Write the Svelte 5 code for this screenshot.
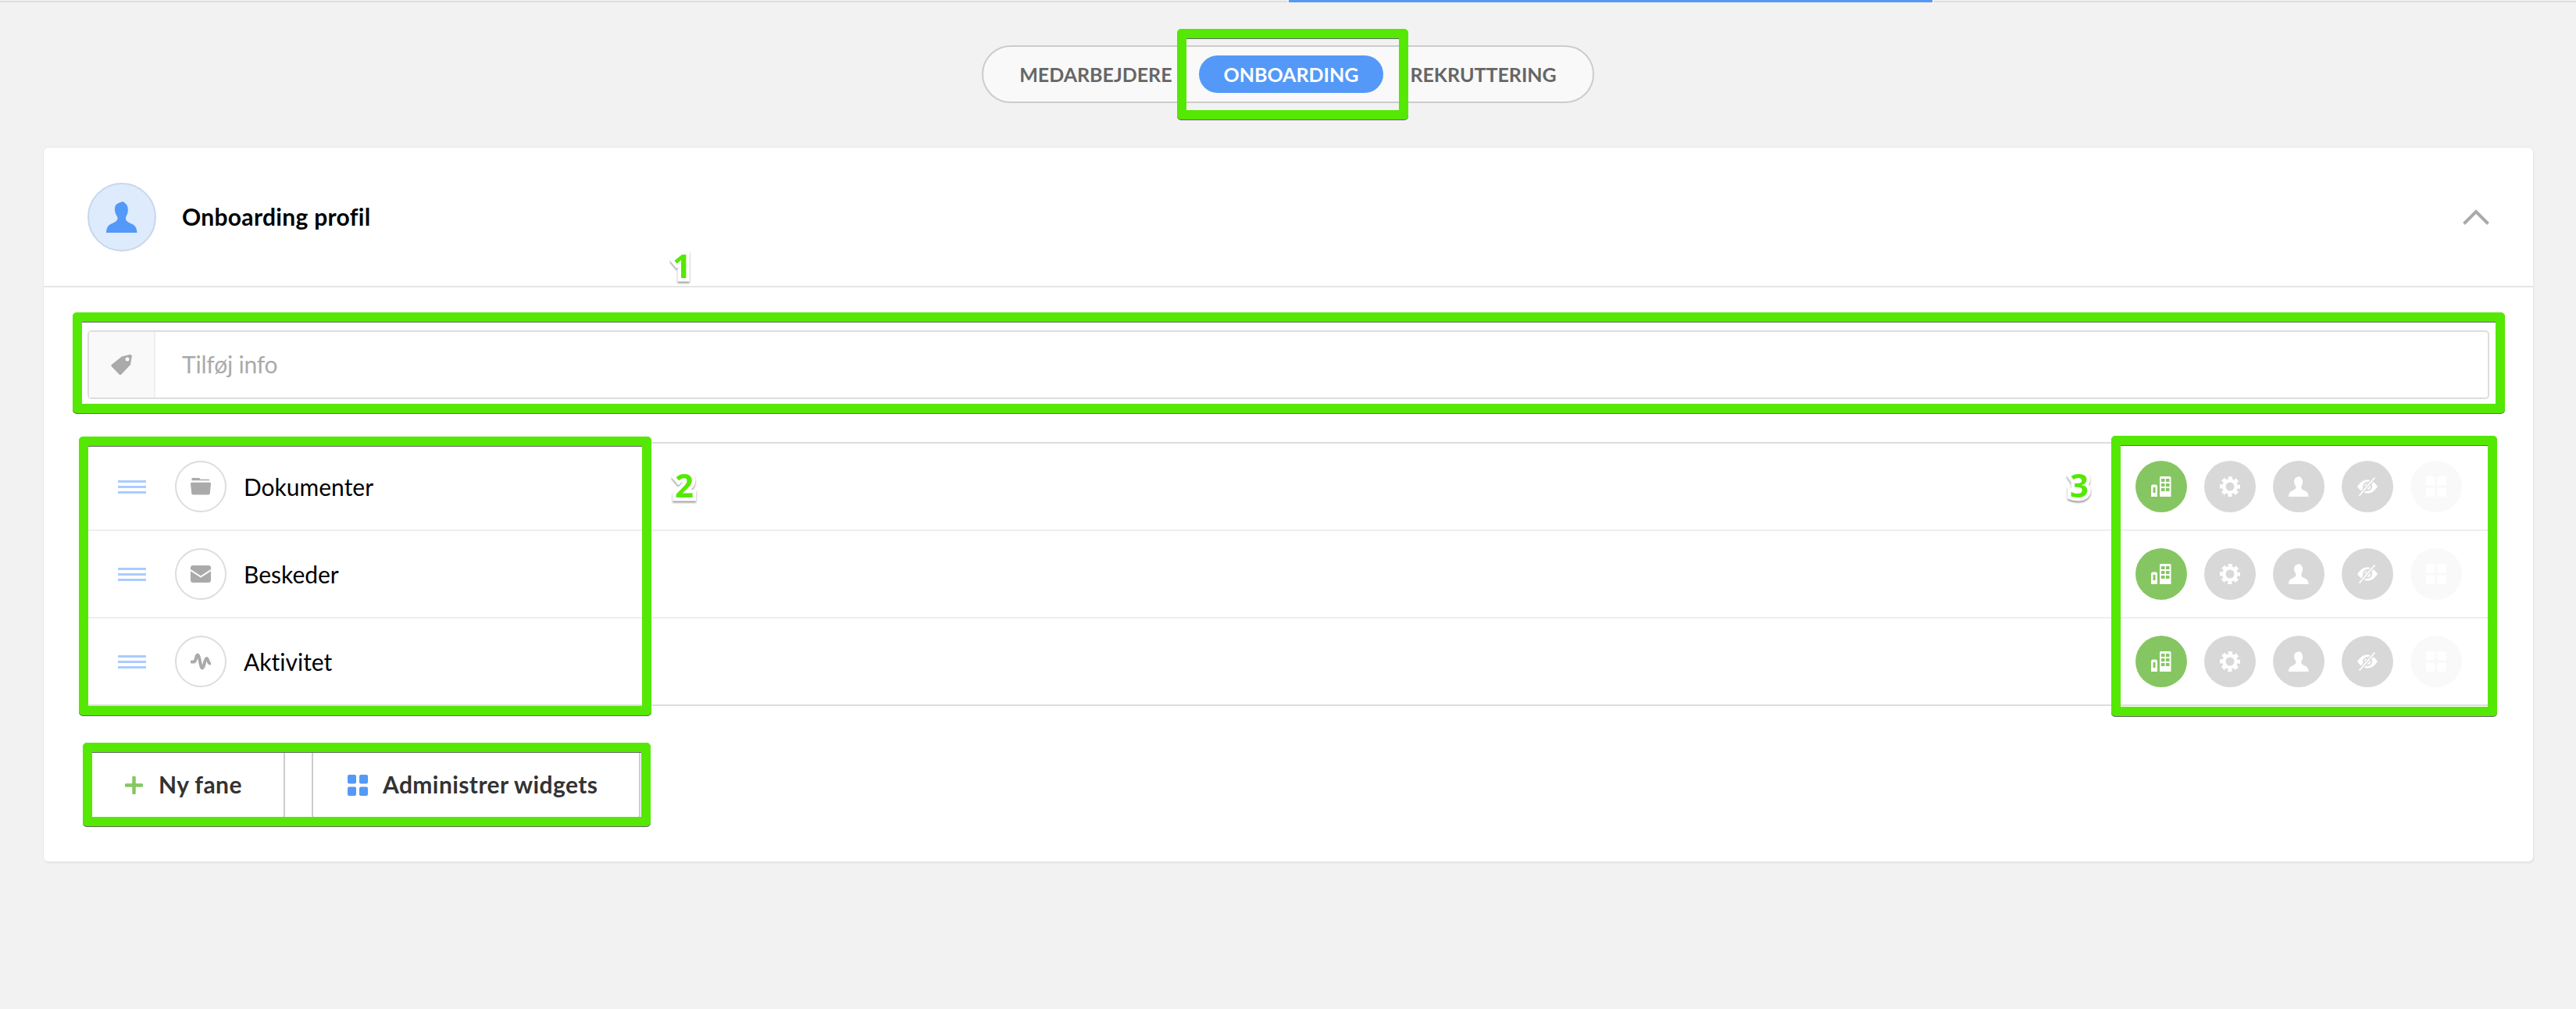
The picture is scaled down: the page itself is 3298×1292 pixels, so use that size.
<script>
  const rows = [
    { name: 'Dokumenter', icon: 'folder' },
    { name: 'Beskeder', icon: 'mail' },
    { name: 'Aktivitet', icon: 'pulse' }
  ];
  const tabs = ['MEDARBEJDERE', 'ONBOARDING', 'REKRUTTERING'];
</script>

{#snippet person(cls)}
  <svg class={cls} viewBox="0 0 40 40"><path fill="currentColor" d="M21 0C19 1.500 14 1 11.500 6C10.500 9 11 12 11.500 14C12 17 14 18 14.500 21C15 24 12 26 8 28C3 30 .5 32 0 40L39.500 40C39 32 36 30 31 28C27 26 24.500 24 25 21C25.500 18 27 17 27.500 14C28 11 28 8 27 6C26 3 24 2 21 0Z"/></svg>
{/snippet}

<div class="page">
  <div class="topbar"><span class="seg first"></span><span class="seg blue"></span><span class="seg"></span></div>

  <div class="tabs-wrap">
    <div class="tabs">
      {#each tabs as t, i}
        <span class="tab" class:active={i === 1}>{t}</span>
      {/each}
    </div>
  </div>

  <section class="card">
    <header class="head">
      <div class="avatar">{@render person('avatar-icon')}</div>
      <h2>Onboarding profil</h2>
      <svg class="chev" viewBox="0 0 34 20"><path d="M1.500 18.500L17 3L32.500 18.500" fill="none" stroke="#aaa" stroke-width="4"/></svg>
    </header>

    <div class="body">
      <div class="field">
        <div class="addon">
          <svg class="tag" viewBox="0 0 27 26"><path fill="#aaa" fill-rule="evenodd" d="M14 2.500L24.500 0C26 -.2 27 1 26.800 2.500L25 13L13.500 25.200C12.700 26.200 11.500 26.200 10.700 25.400L1 15.500C.2 14.700 .2 13.500 1 12.700ZM21 3.500A2.500 2.500 0 1 0 21 8.500A2.500 2.500 0 1 0 21 3.500Z"/></svg>
        </div>
        <span class="placeholder">Tilføj info</span>
      </div>

      <div class="table">
        {#each rows as r}
          <div class="row">
            <span class="handle"><i></i><i></i><i></i></span>
            <span class="ring">
              {#if r.icon === 'folder'}
                <svg class="ico" viewBox="0 0 26 22"><path fill="#aaa" d="M2.500 0H10.500C11.500 0 12 .8 12.500 1.800H23C23.800 1.800 24.300 2.400 24.300 3.300H1.500V1C1.500 .4 2 0 2.500 0ZM1.500 5.800H24.500C25.500 5.800 26 6.500 26 7.500L24.800 19.500C24.700 20.800 24 21.500 22.800 21.500H3.200C2 21.500 1.300 20.800 1.200 19.500L0 7.500C0 6.500 .5 5.800 1.500 5.800Z"/></svg>
              {:else if r.icon === 'mail'}
                <svg class="ico" viewBox="0 0 26 22"><rect width="26" height="22" rx="3" fill="#aaa"/><path d="M0 6L13 14.500L26 6" fill="none" stroke="#fff" stroke-width="2"/></svg>
              {:else}
                <svg class="ico" viewBox="0 0 26 22"><path d="M1.500 11.500H4.500C7 11.500 6.800 2.500 9 2.500C11.500 2.500 12.500 19.500 15 19.500C17.500 19.500 18 7 20.500 7C22.500 7 22.500 13.500 24.500 13.500" fill="none" stroke="#aaa" stroke-width="4" stroke-linejoin="round" stroke-linecap="round"/></svg>
              {/if}
            </span>
            <span class="name">{r.name}</span>
            <div class="perms">
              <span class="dot green">
                <svg class="pi" viewBox="0 0 26 26">
                  <path fill="#fff" d="M0 13C0 11.500 1 10.500 2 10.500H6C7 10.500 8 11.500 8 13V26H0ZM11 1.500C11 .5 12 0 12.500 0H23.500C24.500 0 25.500 .5 25.500 1.500V26H11Z"/>
                  <g fill="#85c662">
                    <rect x="2.500" y="14" width="3" height="7"/>
                    <rect x="13" y="3" width="4.500" height="4"/><rect x="19" y="3" width="4.500" height="4"/>
                    <rect x="13" y="9" width="4.500" height="4"/><rect x="19" y="9" width="4.500" height="4"/>
                    <rect x="13" y="15" width="4.500" height="4"/><rect x="19" y="15" width="4.500" height="4"/>
                  </g>
                </svg>
              </span>
              <span class="dot">
                <svg class="pi" viewBox="0 0 26 26">
                  <circle cx="13" cy="13" r="10" fill="#fff"/>
                  <circle cx="13" cy="13" r="11.200" fill="none" stroke="#fff" stroke-width="3.600" stroke-dasharray="5.200 3.600" stroke-dashoffset="2.600"/>
                  <circle cx="13" cy="13" r="5.500" fill="#d8d8d8"/>
                </svg>
              </span>
              <span class="dot white-ico">{@render person('pi')}</span>
              <span class="dot">
                <svg class="pi" viewBox="0 0 26 26">
                  <path fill="#fff" d="M0 13C4 7 8 4.500 13 4.500S22 7 26 13C22 19 18 21.500 13 21.500S4 19 0 13Z"/>
                  <circle cx="13" cy="13" r="5" fill="none" stroke="#d8d8d8" stroke-width="2"/>
                  <path d="M3 24L22 2" stroke="#d8d8d8" stroke-width="4.500"/>
                  <path d="M3 24L22 2" stroke="#fff" stroke-width="1.800" stroke-linecap="round"/>
                </svg>
              </span>
              <span class="dot faint">
                <svg class="pi" viewBox="0 0 26 26"><g fill="#fff"><rect width="11.500" height="11.500" rx="2"/><rect x="14.500" width="11.500" height="11.500" rx="2"/><rect y="14.500" width="11.500" height="11.500" rx="2"/><rect x="14.500" y="14.500" width="11.500" height="11.500" rx="2"/></g></svg>
              </span>
            </div>
          </div>
        {/each}
      </div>

      <div class="actions">
        <button class="btn first">
          <svg class="plus" viewBox="0 0 23 23"><path d="M11.500 1.500V21.500M1.500 11.500H21.500" stroke="#85c662" stroke-width="4.500" stroke-linecap="round"/></svg>
          <span class="label">Ny fane</span>
        </button>
        <button class="btn second">
          <svg class="grid" viewBox="0 0 26 27"><g fill="#5499f7"><rect width="11" height="11.500" rx="2"/><rect x="15" width="11" height="11.500" rx="2"/><rect y="15.500" width="11" height="11.500" rx="2"/><rect x="15" y="15.500" width="11" height="11.500" rx="2"/></g></svg>
          <span class="label">Administrer widgets</span>
        </button>
      </div>
    </div>
  </section>

  <div class="mark m-tab"></div>
  <div class="mark m-field"></div>
  <div class="mark m-names"></div>
  <div class="mark m-perms"></div>
  <div class="mark m-btns"></div>
  <span class="num n1">1</span>
  <span class="num n2">2</span>
  <span class="num n3">3</span>
</div>

<style>
  :global(body) {
    margin: 0;
    background: #f2f2f2;
    font-family: Lato, "Liberation Sans", sans-serif;
    font-variant-ligatures: none;
  }
  .page {
    position: relative;
    height: 1292px;
    overflow: hidden;
  }
  .topbar {
    display: flex;
    height: 3px;
    gap: 2px;
  }
  .seg {
    flex: 1;
    background: #dedede;
    margin-top: 1px;
  }
  .seg.first {
    flex: none;
    width: 1648px;
  }
  .seg.blue {
    flex: none;
    width: 824px;
    background: #5499f7;
    margin-top: 0;
  }
  .tabs-wrap {
    display: flex;
    justify-content: center;
    margin-top: 55px;
  }
  .tabs {
    display: flex;
    align-items: center;
    gap: 2px;
    height: 74px;
    box-sizing: border-box;
    padding: 0 14px;
    background: #f9f9f9;
    border: 2px solid #ccc;
    border-radius: 37px;
  }
  .tab {
    padding: 0 32px;
    height: 48px;
    line-height: 48px;
    font-size: 25px;
    font-weight: 700;
    color: #666;
    border-radius: 24px;
    white-space: nowrap;
  }
  .tab.active {
    background: #5499f7;
    color: #fff;
  }
  .card {
    margin: 57px 55px 0 56px;
    height: 914px;
    box-sizing: border-box;
    background: #fff;
    border-radius: 6px;
    box-shadow: 0 0 0 1px #e8e8e8, 1px 2px 2px #ddd;
  }
  .head {
    display: flex;
    align-items: center;
    height: 179px;
    box-sizing: border-box;
    padding: 0 56px;
    border-bottom: 2px solid #e5e5e5;
  }
  .avatar {
    display: flex;
    align-items: center;
    justify-content: center;
    width: 88px;
    height: 88px;
    box-sizing: border-box;
    border: 2px solid #c8d8ea;
    border-radius: 50%;
    background: #deebfc;
    color: #5499f7;
  }
  .avatar-icon {
    width: 40px;
    height: 40px;
  }
  h2 {
    margin: 0 0 2px 33px;
    font-size: 30px;
    letter-spacing: .3px;
    font-weight: 700;
    color: #000;
    flex: 1;
  }
  .chev {
    width: 34px;
    height: 20px;
  }
  .body {
    padding: 55px 56px 0;
  }
  .field {
    display: flex;
    align-items: center;
    height: 88px;
    box-sizing: border-box;
    border: 2px solid #ddd;
    border-radius: 5px;
  }
  .addon {
    display: flex;
    align-items: center;
    justify-content: center;
    width: 85px;
    height: 100%;
    background: #f9f9f9;
    border-right: 2px solid #eee;
    box-sizing: border-box;
  }
  .tag {
    width: 27px;
    height: 26px;
  }
  .placeholder {
    margin: 0 0 2px 34px;
    font-size: 30px;
    letter-spacing: -.2px;
    color: #aaa;
  }
  .table {
    margin-top: 55px;
    border-top: 2px solid #ddd;
    border-bottom: 2px solid #ddd;
  }
  .row {
    display: flex;
    align-items: center;
    height: 110px;
    box-sizing: border-box;
    padding-left: 39px;
  }
  .row + .row {
    height: 112px;
    border-top: 2px solid #eee;
  }
  .handle {
    display: flex;
    flex-direction: column;
    gap: 4px;
    width: 36px;
  }
  .handle i {
    height: 3px;
    background: #aaccff;
  }
  .ring {
    display: flex;
    align-items: center;
    justify-content: center;
    width: 66px;
    height: 66px;
    margin-left: 37px;
    box-sizing: border-box;
    border: 2px solid #ddd;
    border-radius: 50%;
  }
  .ico {
    width: 26px;
    height: 22px;
  }
  .name {
    margin: 0 0 1px 22px;
    font-size: 30px;
    color: #000;
    flex: 1;
  }
  .perms {
    display: flex;
    gap: 22px;
    padding-right: 35px;
  }
  .dot {
    display: flex;
    align-items: center;
    justify-content: center;
    width: 66px;
    height: 66px;
    border-radius: 50%;
    background: #d8d8d8;
  }
  .dot.green {
    background: #85c662;
  }
  .dot.faint {
    background: #f9f9f9;
  }
  .white-ico {
    color: #fff;
  }
  .pi {
    width: 26px;
    height: 26px;
  }
  .actions {
    display: flex;
    gap: 34px;
    margin: 57px 0 0 -2px;
  }
  .btn {
    display: flex;
    align-items: center;
    height: 88px;
    box-sizing: border-box;
    background: #fff;
    border: 2px solid #ccc;
    border-radius: 5px;
    font: 700 30px Lato, "Liberation Sans", sans-serif;
    font-variant-ligatures: none;
    letter-spacing: .4px;
    color: #333;
    padding: 0;
  }
  .label {
    margin-bottom: 2px;
  }
  .btn.first {
    width: 255px;
    padding-left: 48px;
    gap: 20px;
  }
  .btn.second {
    width: 421px;
    padding-left: 44px;
    gap: 19px;
  }
  .plus {
    width: 23px;
    height: 23px;
  }
  .grid {
    width: 26px;
    height: 27px;
  }
  .mark {
    position: absolute;
    box-sizing: border-box;
    border: 12px solid #55e804;
    border-radius: 5px;
    filter: drop-shadow(0 1px 0 #666);
  }
  .m-tab {
    left: 1507px;
    top: 37px;
    width: 296px;
    height: 116px;
  }
  .m-field {
    left: 93px;
    top: 400px;
    width: 3114px;
    height: 129px;
  }
  .m-names {
    left: 101px;
    top: 559px;
    width: 733px;
    height: 357px;
  }
  .m-perms {
    left: 2703px;
    top: 558px;
    width: 494px;
    height: 359px;
  }
  .m-btns {
    left: 106px;
    top: 951px;
    width: 727px;
    height: 107px;
  }
  .num {
    position: absolute;
    font: 700 42px/1 "Open Sans", sans-serif;
    color: #55e804;
    -webkit-text-stroke: 9px #fff;
    paint-order: stroke fill;
    filter: drop-shadow(0 2px 1px #999);
  }
  .n1 { left: 861px; top: 319px; }
  .n2 { left: 864px; top: 600px; }
  .n3 { left: 2650px; top: 600px; }
</style>
